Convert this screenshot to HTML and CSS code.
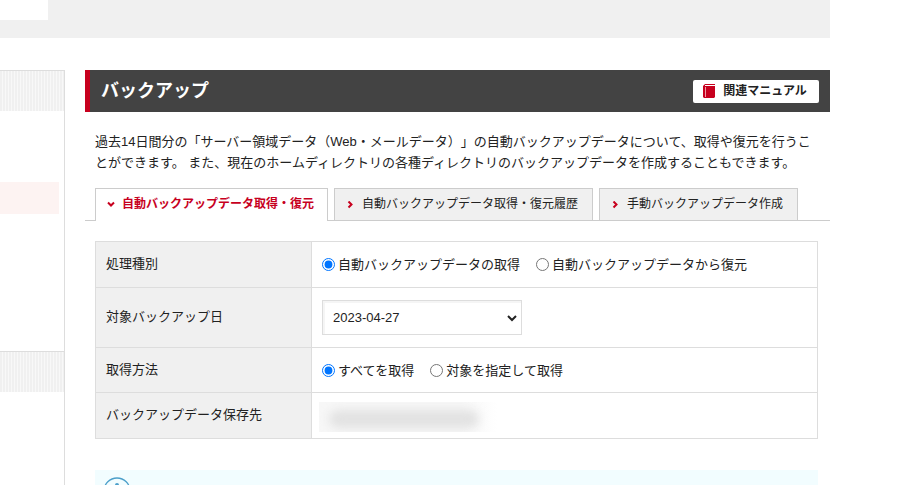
FILE: index.html
```html
<!DOCTYPE html>
<html lang="ja">
<head>
<meta charset="utf-8">
<title>バックアップ</title>
<link rel="stylesheet" href="styles.css">
</head>
<body>
<div class="page">
  <header class="topbar"><div class="topbar-panel"></div></header>
  <div class="columns">
    <aside class="sidebar">
      <div class="side-group">
        <div class="side-head"></div>
        <div class="side-body"><div class="side-current"></div></div>
      </div>
      <div class="side-group">
        <div class="side-head"></div>
      </div>
    </aside>
    <main class="main">
      <div class="title-bar">
        <h1>バックアップ</h1>
        <a class="manual" href="#">
          <svg width="12" height="14" viewBox="0 0 12 14" aria-hidden="true"><path d="M2 0H12V1H2V2H12V13L11 14H1L0 13V2Z" fill="#c7001e"/><path d="M2 1H12V2H2Z" fill="#fff"/><path d="M2 3H3V13H2Z" fill="#ee9aa5"/></svg>
          <span>関連マニュアル</span>
        </a>
      </div>
      <p class="lead">過去14日間分の「サーバー領域データ（Web・メールデータ）」の自動バックアップデータについて、取得や復元を行うことができます。 また、現在のホームディレクトリの各種ディレクトリのバックアップデータを作成することもできます。</p>
      <nav class="tabs">
        <a class="tab tab-active" href="#"><svg width="8" height="8" viewBox="0 0 8 8" aria-hidden="true"><path d="M1 2.500L4 5.500L7 2.500"/></svg>自動バックアップデータ取得・復元</a>
        <a class="tab" href="#"><svg width="8" height="8" viewBox="0 0 8 8" aria-hidden="true"><path d="M1.500 0.500L4.500 3.500L1.500 6.500"/></svg>自動バックアップデータ取得・復元履歴</a>
        <a class="tab" href="#"><svg width="8" height="8" viewBox="0 0 8 8" aria-hidden="true"><path d="M1.500 0.500L4.500 3.500L1.500 6.500"/></svg>手動バックアップデータ作成</a>
      </nav>
      <form class="content">
        <table class="settings">
          <tr>
            <th scope="row">処理種別</th>
            <td><div class="options">
              <label><input type="radio" name="kind" checked>自動バックアップデータの取得</label>
              <label><input type="radio" name="kind">自動バックアップデータから復元</label>
            </div></td>
          </tr>
          <tr class="row-tall">
            <th scope="row"><label for="date">対象バックアップ日</label></th>
            <td><div class="select">
              <select id="date"><option>2023-04-27</option></select>
              <svg width="10" height="8" viewBox="0 0 10 8" aria-hidden="true"><path d="M1 2L5 6L9 2"/></svg>
            </div></td>
          </tr>
          <tr>
            <th scope="row">取得方法</th>
            <td><div class="options">
              <label><input type="radio" name="method" checked>すべてを取得</label>
              <label><input type="radio" name="method">対象を指定して取得</label>
            </div></td>
          </tr>
          <tr>
            <th scope="row">バックアップデータ保存先</th>
            <td class="masked"><div class="mask"><div class="mask-blur"></div></div></td>
          </tr>
        </table>
        <div class="notice">
          <svg width="28" height="28" viewBox="0 0 28 28" aria-hidden="true"><circle cx="14" cy="14" r="13" fill="#f2fdff" stroke="#4c9fca" stroke-width="1.3"/><circle cx="14" cy="8" r="2" fill="#4c9fca"/><path d="M14 12V21" stroke="#4c9fca" stroke-width="3"/></svg>
        </div>
      </form>
    </main>
  </div>
</div>
</body>
</html>
```
FILE: styles.css
```css
* { box-sizing: border-box; }

body {
  margin: 0;
  background: #fff;
  color: #222;
  font: 13px/21px "Liberation Sans", "Noto Sans CJK JP", sans-serif;
  text-spacing-trim: space-all;
}

a { color: inherit; text-decoration: none; }

.page {
  display: flex;
  flex-direction: column;
  height: 100vh;
  padding-right: 10%;
  overflow: hidden;
}

.topbar {
  flex: none;
  height: 38px;
  background: #f0f0f0;
}
.topbar-panel { width: 48px; height: 20px; background: #fff; }

.columns {
  display: grid;
  grid-template-columns: 65px minmax(0, 1fr);
  gap: 20px;
  flex: 1;
  padding-top: 32px;
}

.sidebar { border-right: 1px solid #ddd; }
.side-head {
  height: 41px;
  border-top: 1px solid #ddd;
  background: repeating-linear-gradient(90deg, #f0f0f0 0 2px, #f8f8f8 2px 3px);
}
.side-body { height: 240px; padding: 71px 5px 0 0; }
.side-current { height: 32px; background: #fdf3f2; }

.title-bar {
  display: flex;
  align-items: center;
  justify-content: space-between;
  height: 42px;
  padding: 0 11px;
  border-left: 5px solid #c7001e;
  background: #434343;
}
.title-bar h1 { margin: 0; color: #fff; font-size: 18px; line-height: 24px; }
.manual {
  display: flex;
  align-items: center;
  gap: 8px;
  height: 23px;
  padding: 0 12px 0 10px;
  border-radius: 2px;
  background: #fff;
  font-size: 12px;
  font-weight: bold;
}

.lead { margin: 19px 9px 15px 10px; }

.tabs {
  display: flex;
  gap: 6px;
  padding: 0 10px;
  border-bottom: 1px solid #ccc;
}
.tab {
  display: flex;
  align-items: center;
  gap: 7px;
  height: 32px;
  padding: 0 14px 0 12px;
  border: 1px solid #ccc;
  border-bottom: 0;
  background: #f0f0f0;
  font-size: 12px;
  white-space: nowrap;
}
.tab svg { fill: none; stroke: #c7001e; stroke-width: 2; }
.tab-active {
  height: 33px;
  margin-bottom: -1px;
  padding: 0 13px 2px 11px;
  background: #fff;
  color: #c7001e;
  font-weight: bold;
}

.content { padding: 20px 12px 0 10px; }

.settings { width: 100%; border-collapse: collapse; }
.settings tr { height: 46px; }
.settings .row-tall { height: 60px; }
.settings tr:nth-child(3) { height: 45px; }
.settings th,
.settings td { padding: 0 10px; border: 1px solid #ddd; }
.settings th {
  width: 216px;
  padding-bottom: 2px;
  background: #f0f0f0;
  font-weight: normal;
  text-align: left;
}

.options { display: flex; gap: 16px; }
.options label { display: flex; align-items: center; gap: 3px; }
.options input { width: 13px; height: 13px; margin: 0; }

.select { display: grid; width: 200px; align-items: center; }
.select select,
.select svg { grid-area: 1 / 1; }
.select select {
  height: 35px;
  padding: 0 10px;
  border: 1px solid #ddd;
  border-radius: 0;
  background: #fff;
  box-shadow: inset 2px 2px 0 #f5f5f5;
  color: #222;
  font: inherit;
  appearance: none;
}
.select svg {
  justify-self: end;
  margin-right: 5px;
  fill: none;
  stroke: #222;
  stroke-width: 2;
  pointer-events: none;
}

.settings .masked { padding: 2px 7px 0; }
.mask {
  width: 178px;
  height: 30px;
  padding: 8px 18px 4px 10px;
  overflow: hidden;
  background: linear-gradient(90deg, #f7f7f7 80%, #fff);
}
.mask-blur { height: 18px; border-radius: 9px; background: #e2e2e2; filter: blur(5px); }

.notice { height: 80px; margin-top: 31px; padding: 7px 8px; background: #f2fdff; }
```
